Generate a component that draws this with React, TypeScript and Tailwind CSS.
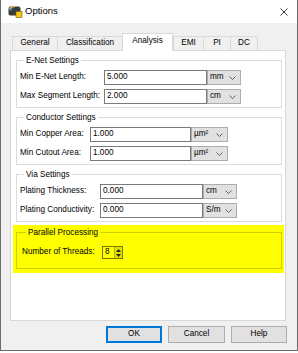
import React from 'react';

function Chevron() {
  return (
    <svg width="7" height="4" viewBox="0 0 7 4" className="shrink-0">
      <path d="M0.5 0.5 L3.5 3.5 L6.5 0.5" fill="none" stroke="#606060" strokeWidth="1" />
    </svg>
  );
}

function AppIcon() {
  return (
    <svg width="15" height="13" viewBox="0 0 15 13">
      <rect x="0.5" y="1.5" width="12" height="9" rx="2" fill="#3b3b3b" />
      <path d="M1.5 3 Q2.5 2 5 2 L4 5 Q2 5 1.5 6 Z" fill="#3a8de0" />
      <path d="M1 4 Q3 1 7 2" fill="none" stroke="#f2c230" strokeWidth="1.2" />
      <rect x="8" y="6.5" width="6" height="6" fill="#f5c518" stroke="#7a5b00" strokeWidth="0.6" />
    </svg>
  );
}

type FieldProps = {
  label: string;
  labelW: string;
  value: string;
  unit: string;
  inputW: string;
  unitW: string;
};

function Field({ label, labelW, value, unit, inputW, unitW }: FieldProps) {
  return (
    <div className="flex items-center h-[15px]">
      <div className={`${labelW} shrink-0 whitespace-nowrap`}>{label}</div>
      <div className={`${inputW} h-[15px] border border-[#7a7a7a] bg-white px-[2px] flex items-center`}>{value}</div>
      <div className={`${unitW} h-[15px] border border-[#adadad] bg-[#e1e1e1] flex items-center justify-between pl-[2px] pr-[4px]`}>
        <span>{unit}</span>
        <Chevron />
      </div>
    </div>
  );
}

function Group({ title, children }: { title: string; children: React.ReactNode }) {
  return (
    <fieldset className="border border-[#dcdcdc] px-[3px] pt-[4px] pb-[3px]">
      <legend className="ml-[4px] px-[2px] leading-[11px]">{title}</legend>
      <div className="flex flex-col gap-[4px]">{children}</div>
    </fieldset>
  );
}

const tabs = [
  { name: 'General', w: 'w-[45px]' },
  { name: 'Classification', w: 'w-[65px]' },
  { name: 'Analysis', w: 'w-[51px]', active: true },
  { name: 'EMI', w: 'w-[30px]' },
  { name: 'PI', w: 'w-[27px]' },
  { name: 'DC', w: 'w-[28px]' },
];

export default function App() {
  return (
    <div className="w-[298px] h-[353px] bg-white font-['Liberation_Sans',Arial,sans-serif] text-[8.2px] text-black">
      <div className="w-[298px] h-[351px] border-l border-r border-b border-[#6b6b6b] bg-[#f0f0f0] flex flex-col">
        {/* title bar */}
        <div className="h-[23px] bg-white flex items-center pl-[7px] pr-[9px]">
          <AppIcon />
          <span className="ml-[2px] text-[9.5px]">Options</span>
          <svg width="8" height="8" viewBox="0 0 8 8" className="ml-auto">
            <path d="M0.5 0.5 L7.5 7.5 M7.5 0.5 L0.5 7.5" stroke="#222" strokeWidth="0.9" />
          </svg>
        </div>

        <div className="pl-[9px] pt-[10px] flex flex-col">
          {/* tabs */}
          <div className="h-[17px] flex items-end pl-[2px]">
            {tabs.map((t, i) =>
              t.active ? (
                <div
                  key={t.name}
                  className={`${t.w} h-[18px] -mb-px relative z-10 bg-white border-t border-l border-r border-[#d9d9d9] flex items-center justify-center pb-[2px]`}
                >
                  {t.name}
                </div>
              ) : (
                <div
                  key={t.name}
                  className={`${t.w} h-[14px] border-t border-l border-[#d9d9d9] ${i === tabs.length - 1 ? 'border-r' : ''} flex items-center justify-center`}
                >
                  {t.name}
                </div>
              )
            )}
          </div>

          {/* panel */}
          <div className="w-[276px] h-[271px] bg-white border border-[#d9d9d9] pl-[5px] pr-[3px] pt-[4px] flex flex-col">
            <Group title="E-Net Settings">
              <Field label="Min E-Net Length:" labelW="w-[84px]" value="5.000" unit="mm" inputW="w-[103px]" unitW="w-[34px]" />
              <Field label="Max Segment Length:" labelW="w-[84px]" value="2.000" unit="cm" inputW="w-[103px]" unitW="w-[34px]" />
            </Group>
            <div className="mt-[4px]">
              <Group title="Conductor Settings">
                <Field label="Min Copper Area:" labelW="w-[70px]" value="1.000" unit="µm²" inputW="w-[101px]" unitW="w-[37px]" />
                <Field label="Min Cutout Area:" labelW="w-[70px]" value="1.000" unit="µm²" inputW="w-[101px]" unitW="w-[37px]" />
              </Group>
            </div>
            <div className="mt-[4px]">
              <Group title="Via Settings">
                <Field label="Plating Thickness:" labelW="w-[80px]" value="0.000" unit="cm" inputW="w-[103px]" unitW="w-[34px]" />
                <Field label="Plating Conductivity:" labelW="w-[80px]" value="0.000" unit="S/m" inputW="w-[103px]" unitW="w-[34px]" />
              </Group>
            </div>

            {/* highlighted group */}
            <div className="mt-[3px] -ml-[3px] -mr-[2px] pl-[3px] pr-[2px] pt-[2px] pb-[4px] bg-[#ffff00]">
              <fieldset className="border border-[#cfcf00] pl-[5px] pt-[8px] pb-[9px]">
                <legend className="ml-[4px] px-[2px] leading-[11px]">Parallel Processing</legend>
                <div className="flex items-center h-[13px]">
                  <div className="w-[80px] whitespace-nowrap">Number of Threads:</div>
                  <div className="w-[21px] h-[13px] border border-[#7a7a00] flex items-center">
                    <span className="pl-[2px] flex-1">8</span>
                    <div className="w-[8px] h-full bg-[#e0e000] border-l border-[#b0b000] flex flex-col items-center justify-center gap-[2px]">
                      <svg width="5" height="3" viewBox="0 0 5 3"><path d="M0 3 L2.5 0 L5 3 Z" fill="#222" /></svg>
                      <svg width="5" height="3" viewBox="0 0 5 3"><path d="M0 0 L2.5 3 L5 0 Z" fill="#222" /></svg>
                    </div>
                  </div>
                </div>
              </fieldset>
            </div>
          </div>

          {/* buttons */}
          <div className="w-[277px] mt-[5px] flex justify-end gap-[6px]">
            <button className="w-[56px] h-[17px] bg-[#e1e1e1] border border-[#0078d7] shadow-[inset_0_0_0_1px_#0078d7]">OK</button>
            <button className="w-[57px] h-[17px] bg-[#e1e1e1] border border-[#adadad]">Cancel</button>
            <button className="w-[56px] h-[17px] bg-[#e1e1e1] border border-[#adadad]">Help</button>
          </div>
        </div>
      </div>
    </div>
  );
}
